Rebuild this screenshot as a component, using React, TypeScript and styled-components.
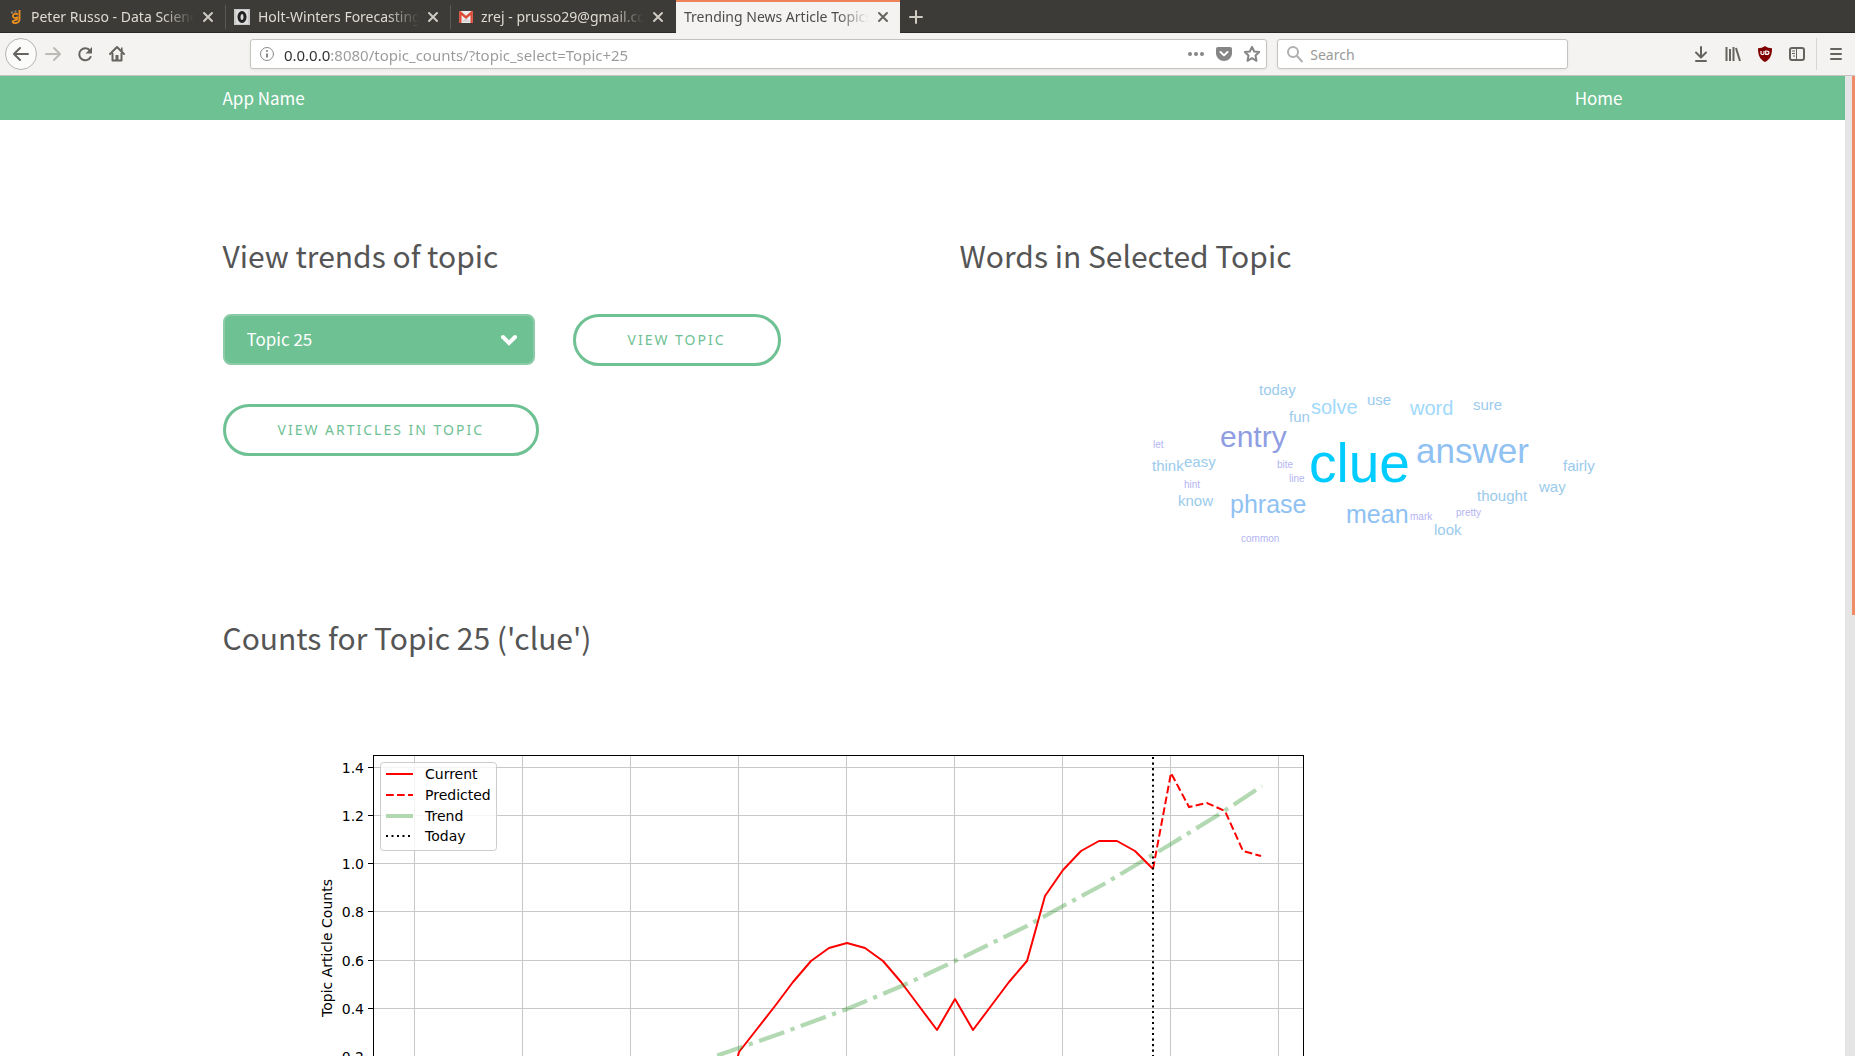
import React from "react";
import styled, { createGlobalStyle } from "styled-components";

const GREEN = "#6ec193";
const UI_FONT = '"Noto Sans", "Open Sans", sans-serif';
const PAGE_FONT = '"Noto Sans CJK SC", "Noto Sans", sans-serif';

const GlobalStyle = createGlobalStyle`
  * { box-sizing: border-box; }
  body { margin: 0; background: #fff; font-family: ${PAGE_FONT}; }
  button, input, select { font: inherit; }
`;

/* ---------- browser chrome ---------- */

const Window = styled.div`
  display: flex;
  flex-direction: column;
  height: 100vh;
  overflow: hidden;
`;

const TabStrip = styled.div`
  display: flex;
  flex: none;
  height: 33px;
  background: #3c3b37;
  box-shadow: inset 0 -1px #2a2927;
  font: 14px/20px ${UI_FONT};
`;

const Tab = styled.div<{ $active?: boolean }>`
  display: flex;
  align-items: center;
  gap: 8px;
  width: ${(p) => (p.$active ? 224 : 225)}px;
  margin-left: ${(p) => (p.$active ? 1 : 0)}px;
  padding: ${(p) => (p.$active ? "0 11px 0 8px" : "0 11px 0 9px")};
  color: ${(p) => (p.$active ? "#4c4c4c" : "#dfdbd2")};
  background: ${(p) => (p.$active ? "#f4f3f1" : "transparent")};
  box-shadow: ${(p) => (p.$active ? "inset 0 2px #f0825a" : "none")};
`;

const TabDivider = styled.span`
  flex: none;
  width: 1px;
  height: 24px;
  margin-top: 5px;
  margin-right: -1px;
  background: #5b5953;
`;

const TabTitle = styled.button`
  flex: 1;
  min-width: 0;
  padding: 0;
  border: 0;
  background: none;
  color: inherit;
  text-align: left;
  white-space: nowrap;
  overflow: hidden;
  mask-image: linear-gradient(to left, transparent, #000 32px);
`;

const IconButton = styled.button<{ $w?: number; $color?: string; $round?: boolean }>`
  display: flex;
  flex: none;
  align-self: center;
  align-items: center;
  justify-content: center;
  width: ${(p) => p.$w ?? 32}px;
  height: ${(p) => (p.$round ? 32 : 24)}px;
  padding: 0;
  border: ${(p) => (p.$round ? "1px solid #b5b4b1" : "0")};
  border-radius: ${(p) => (p.$round ? "50%" : "0")};
  background: ${(p) => (p.$round ? "#fbfbfa" : "none")};
  color: ${(p) => p.$color ?? "#66645f"};
`;

const Toolbar = styled.div`
  display: flex;
  flex: none;
  align-items: center;
  height: 43px;
  padding: 0 3px 0 5px;
  background: #f4f3f1;
  border-bottom: 1px solid #c6c4c1;
  font: 14px/20px ${UI_FONT};
`;

const Spring = styled.span`
  flex: 117 1 0;
`;

const Field = styled.label<{ $grow: number }>`
  display: flex;
  flex: ${(p) => p.$grow} 1 0;
  min-width: 0;
  align-items: center;
  height: 30px;
  padding: 0 0 0 8px;
  background: #fff;
  border: 1px solid #c5c3bf;
  border-radius: 3px;
  box-shadow: 0 1px 3px rgba(0, 0, 0, 0.06);
  color: #8a8a8a;
`;

const AddressInput = styled.input`
  flex: 1;
  min-width: 0;
  padding: 1px 0 0 9px;
  border: 0;
  outline: 0;
  font-size: 15px;
  color: transparent;
  background: linear-gradient(to right, #2e2e2e 56px, #999 56px);
  background-clip: text;
`;

const SearchInput = styled.input`
  flex: 1;
  min-width: 0;
  padding: 1px 0 0 6px;
  border: 0;
  outline: 0;
  background: none;
  &::placeholder { color: #999; opacity: 1; }
`;

const FieldGap = styled.span`
  flex: none;
  width: 10px;
`;

const ToolbarDivider = styled.span`
  width: 1px;
  height: 32px;
  margin: 0 3px;
  background: #d7d5d2;
`;

/* ---------- page ---------- */

const Viewport = styled.div`
  display: flex;
  flex: 1;
  min-height: 0;
`;

const Page = styled.div`
  flex: 1;
  min-width: 0;
  overflow-y: auto;
  scrollbar-width: none;
  color: #555;
`;

const ScrollTrack = styled.div`
  display: flex;
  justify-content: flex-end;
  width: 10px;
  background: #e5e5e5;
`;

const ScrollThumb = styled.div`
  width: 3px;
  height: 55%;
  background: #ef8c65;
`;

const NavBar = styled.nav`
  background: ${GREEN};
`;

const Container = styled.div`
  max-width: 1400px;
  margin: 0 auto;
`;

const NavRow = styled(Container)`
  display: flex;
  justify-content: space-between;
  font-size: 17px;
  line-height: 44px;
`;

const NavLink = styled.a`
  color: #fff;
  text-decoration: none;
`;

const Main = styled(Container).attrs({ as: "main" })`
  padding-top: 112px;
`;

const Columns = styled.div`
  display: grid;
  grid-template-columns: 1fr 1fr;
  column-gap: 74px;
`;

const Heading = styled.h2`
  margin: 0 0 36px;
  font-size: 30px;
  font-weight: 400;
  line-height: 46px;
`;

const TopicForm = styled.form`
  display: flex;
  flex-wrap: wrap;
  gap: 38px;
`;

const SelectBox = styled.label`
  display: grid;
  grid-template-columns: 1fr 33px;
  align-items: center;
  width: 312px;
  height: 51px;
  color: #fff;
  background: ${GREEN};
  border: 2px solid #8bcba8;
  border-radius: 8px;

  svg {
    grid-area: 1 / 2;
    pointer-events: none;
    z-index: 1;
  }
`;

const Select = styled.select`
  grid-area: 1 / 1 / 2 / 3;
  height: 47px;
  padding: 0 22px 2px;
  border: 0;
  outline: 0;
  appearance: none;
  background: transparent;
  color: inherit;
  font-size: 17px;
`;

const PillButton = styled.button`
  height: 52px;
  padding: 0 52px;
  border: 3px solid ${GREEN};
  border-radius: 26px;
  background: transparent;
  color: ${GREEN};
  font: 14px/20px ${UI_FONT};
  letter-spacing: 2px;
  text-transform: uppercase;
  white-space: nowrap;
`;

const Cloud = styled.div`
  display: flex;
  justify-content: flex-end;
  padding-right: 12px;

  text { font-family: "Liberation Sans", Arial, sans-serif; }
`;

const Figure = styled.figure`
  margin: 0;

  svg { display: block; }
  text { font-family: "DejaVu Sans", sans-serif; font-size: 14px; fill: #000; }
`;

/* ---------- icons ---------- */

const stroke = (w: number) => ({
  fill: "none",
  stroke: "currentColor",
  strokeWidth: w,
  strokeLinecap: "round" as const,
  strokeLinejoin: "round" as const,
});

const CloseIcon = () => (
  <svg width="12" height="12" viewBox="0 0 12 12"><path d="M2 2l8 8M10 2l-8 8" {...stroke(2)} /></svg>
);
const PlusIcon = () => (
  <svg width="16" height="16" viewBox="0 0 16 16"><path d="M8 2v12M2 8h12" {...stroke(2)} /></svg>
);
const BackIcon = () => (
  <svg width="18" height="16" viewBox="0 0 18 16"><path d="M16 8H2M8 2L2 8l6 6" {...stroke(2)} /></svg>
);
const ForwardIcon = () => (
  <svg width="18" height="16" viewBox="0 0 18 16"><path d="M2 8h14M10 2l6 6-6 6" {...stroke(2)} /></svg>
);
const ReloadIcon = () => (
  <svg width="16" height="16" viewBox="0 0 16 16">
    <path d="M13 4.6A6 6 0 1 0 13.6 11" {...stroke(2)} />
    <path d="M15 1v6.5H8.5z" fill="currentColor" />
  </svg>
);
const HomeIcon = () => (
  <svg width="18" height="18" viewBox="0 0 18 18">
    <path d="M2 9l7-7 7 7" {...stroke(2)} />
    <path d="M4.5 8.500v7h9v-7" {...stroke(2)} />
    <path d="M7.500 10h3v6h-3z" fill="currentColor" />
    <path d="M13 2.500h1.600v4H13z" fill="currentColor" />
  </svg>
);
const InfoIcon = () => (
  <svg width="16" height="16" viewBox="0 0 16 16">
    <circle cx="8" cy="8" r="6.500" {...stroke(1)} />
    <path d="M8 7.500v4" {...stroke(2)} strokeLinecap="butt" />
    <circle cx="8" cy="5" r="1.100" fill="currentColor" />
  </svg>
);
const DotsIcon = () => (
  <svg width="16" height="16" viewBox="0 0 16 16" fill="currentColor">
    <circle cx="2" cy="8" r="2" /><circle cx="8" cy="8" r="2" /><circle cx="14" cy="8" r="2" />
  </svg>
);
const PocketIcon = () => (
  <svg width="16" height="16" viewBox="0 0 16 16">
    <path d="M2 1h12a2 2 0 0 1 2 2v4.500a8 7.500 0 0 1-16 0V3a2 2 0 0 1 2-2z" fill="currentColor" />
    <path d="M4.500 6L8 9.400 11.500 6" fill="none" stroke="#fff" strokeWidth="2" strokeLinecap="round" strokeLinejoin="round" />
  </svg>
);
const StarIcon = () => (
  <svg width="18" height="18" viewBox="0 0 18 18">
    <path d="M9 1.800l2.200 4.700 5 .6-3.700 3.500 1 5.200L9 13.200l-4.500 2.600 1-5.200L1.800 7.100l5-.6z" {...stroke(2)} />
  </svg>
);
const SearchIcon = () => (
  <svg width="18" height="18" viewBox="0 0 18 18">
    <circle cx="7" cy="7" r="5" {...stroke(2)} stroke="#b0b0b0" />
    <path d="M11 11l5 5.500" {...stroke(2)} stroke="#b0b0b0" />
  </svg>
);
const DownloadIcon = () => (
  <svg width="16" height="18" viewBox="0 0 16 18">
    <path d="M8 2v10M3 7.500L8 12.500l5-5M3 16h10" {...stroke(2)} />
  </svg>
);
const LibraryIcon = () => (
  <svg width="16" height="16" viewBox="0 0 16 16">
    <path d="M1.500 1v14M5 3v12M8.500 1v14M11 2l4 13" {...stroke(2)} strokeLinecap="butt" />
  </svg>
);
const ShieldIcon = () => (
  <svg width="16" height="18" viewBox="0 0 16 18">
    <path d="M8 1c2 1.600 4.500 2.200 7 2.200C15 10 13.500 14 8 17 2.500 14 1 10 1 3.200 3.500 3.200 6 2.600 8 1z" fill="#800000" />
    <path d="M4 6v2.600c0 1.200 3 1.200 3 0V6M8.700 6v3.400h1c3 0 3-3.400 0-3.400z" fill="none" stroke="#fff" strokeWidth="1.200" />
  </svg>
);
const SidebarIcon = () => (
  <svg width="16" height="16" viewBox="0 0 16 16">
    <rect x="1" y="2" width="14" height="12" rx="2" {...stroke(2)} />
    <path d="M7.500 2v12M3 5h3M3 7.500h3M4 10h2" {...stroke(1)} strokeLinecap="butt" />
  </svg>
);
const MenuIcon = () => (
  <svg width="16" height="16" viewBox="0 0 16 16"><path d="M3 3h10M3 8h10M3 13h10" {...stroke(2)} /></svg>
);
const ChevronIcon = () => (
  <svg width="18" height="14" viewBox="0 0 18 14">
    <path d="M3 4l6 6 6-6" fill="none" stroke="#fff" strokeWidth="4" strokeLinecap="round" />
  </svg>
);
const SnakeFavicon = () => (
  <svg width="14" height="16" viewBox="0 0 14 16">
    <path d="M10.500 1v9c0 5-7 5-7 2.500 0-1.500 5-1 5-3" fill="none" stroke="#f09020" strokeWidth="1.800" />
    <path d="M9 5.500c-3-2-5.500 0-5 2s3.500 2 5 .5" fill="none" stroke="#f09020" strokeWidth="1.800" />
    <path d="M2 2.500h2v2H2zM5.500 1.500h2v2h-2z" fill="#8b8273" />
  </svg>
);
const OtextsFavicon = () => (
  <svg width="16" height="16" viewBox="0 0 16 16">
    <rect width="16" height="16" fill="#c9c9c9" />
    <rect x="2" y="1" width="12" height="14" fill="#dcdcdc" />
    <ellipse cx="8" cy="8" rx="3" ry="4.500" fill="none" stroke="#222" strokeWidth="3" />
  </svg>
);
const MailFavicon = () => (
  <svg width="14" height="12" viewBox="0 0 14 12">
    <rect width="14" height="12" rx="1" fill="#ececec" />
    <path d="M2 11l5-4 5 4" fill="#d5d5d5" />
    <path d="M1.300 12V1.500L7 6.500l5.700-5V12" fill="none" stroke="#dd4b39" strokeWidth="2.400" />
  </svg>
);

/* ---------- word cloud ---------- */

type Word = [text: string, size: number, x: number, y: number];

const WORDS: Word[] = [
  ["clue", 55, 198, 168], ["answer", 35, 305, 149], ["entry", 30, 109, 133],
  ["phrase", 25, 119, 199], ["mean", 25, 235, 209], ["solve", 20, 200, 100],
  ["word", 20, 299, 101], ["today", 15, 148, 81], ["fun", 15, 178, 108],
  ["use", 15, 256, 91], ["sure", 15, 362, 96], ["easy", 15, 73, 153],
  ["think", 15, 41, 157], ["know", 15, 67, 192], ["fairly", 15, 452, 157],
  ["way", 15, 428, 178], ["thought", 15, 366, 187], ["look", 15, 323, 221],
  ["let", 10, 42, 134], ["bite", 10, 166, 154], ["line", 10, 178, 168],
  ["hint", 10, 73, 174], ["mark", 10, 299, 206], ["pretty", 10, 345, 202],
  ["common", 10, 130, 228],
];

const SIZE_COLOR: Record<number, string> = {
  55: "#00ccff", 35: "#8fc1f2", 30: "#8f9de2", 25: "#8fc1f2",
  20: "#a0d9fb", 15: "#9acbec", 10: "#b3b5f2",
};

const WordCloud = () => (
  <svg width="500" height="300" viewBox="0 0 500 300" role="img" aria-label="Words in selected topic">
    {WORDS.map(([text, size, x, y]) => (
      <text key={text} x={x} y={y} fontSize={size} fill={SIZE_COLOR[size]}>{text}</text>
    ))}
  </svg>
);

/* ---------- chart ---------- */

const LEFT = 150;
const RIGHT = 1081;
const TOP = 60;
const BOTTOM = 445;

const ROWS = [1.4, 1.2, 1.0, 0.8, 0.6, 0.4, 0.2, 0.0].map((value, i) => ({
  value,
  y: Math.round(72 + i * 48.15) + 0.5,
}));
const COLUMNS = Array.from({ length: 9 }, (_, i) => 191.5 + i * 108);

const line = (x0: number, ys: number[]) => ys.map((y, i) => `${x0 + i * 18},${y}`).join(" ");

const CURRENT = line(498, [
  430, 357, 334, 311, 287, 266, 253, 248, 253, 266, 287, 311, 335, 304, 335,
  311, 287, 266, 201, 175, 156, 146, 146, 156, 174,
]);
const PREDICTED = line(930, [174, 78, 112, 108, 116, 156, 161]);
const TREND =
  "452,374 493,361 516,353 559,338 624,314 681,290 732,266 802,232 840,211 881,189 948,149 995,120 1039,91";

const LEGEND = [
  { label: "Current", y: 79, props: { stroke: "#f00", strokeWidth: 2 } },
  { label: "Predicted", y: 100, props: { stroke: "#f00", strokeWidth: 2, strokeDasharray: "7.700 3.300" } },
  { label: "Trend", y: 121, props: { stroke: "#b2d8b2", strokeWidth: 4 } },
  { label: "Today", y: 141, props: { stroke: "#000", strokeWidth: 2, strokeDasharray: "2 3.500" } },
];

const Chart = () => (
  <svg width="1200" height="499" viewBox="0 1 1200 499" role="img" aria-label="Topic article counts over time">
    <g stroke="#c8c8c8" strokeWidth="1">
      {COLUMNS.map((x) => <path key={x} d={`M${x} ${TOP}V${BOTTOM}`} />)}
      {ROWS.map((r) => <path key={r.value} d={`M${LEFT} ${r.y}H${RIGHT}`} />)}
    </g>
    <g fill="none">
      <polyline points={CURRENT} stroke="#f00" strokeWidth="2" strokeLinejoin="round" />
      <polyline points={PREDICTED} stroke="#f00" strokeWidth="2" strokeDasharray="7.700 3.300" />
      <polyline points={TREND} stroke="#008000" strokeOpacity="0.3" strokeWidth="4.200" strokeDasharray="26.700 6.700 4.200 6.700" />
      <path d={`M930 ${BOTTOM}V${TOP}`} stroke="#000" strokeWidth="2" strokeDasharray="2.080 3.440" />
      <rect x={LEFT + 0.5} y={TOP + 0.5} width={RIGHT - LEFT - 1} height={BOTTOM - TOP} stroke="#000" />
    </g>
    {ROWS.map((r) => (
      <g key={r.value}>
        <path d={`M${LEFT - 5} ${r.y}H${LEFT}`} stroke="#000" />
        <text x={LEFT - 9} y={r.y + 5} textAnchor="end">{r.value.toFixed(1)}</text>
      </g>
    ))}
    <text transform="translate(109 253) rotate(-90)" textAnchor="middle">Topic Article Counts</text>
    <rect x="157.500" y="67.500" width="116" height="88" rx="3" fill="#fff" fillOpacity="0.8" stroke="#ccc" />
    {LEGEND.map((l) => (
      <g key={l.label}>
        <path d={`M163 ${l.y}H190`} {...l.props} />
        <text x="202" y={l.y + 5}>{l.label}</text>
      </g>
    ))}
  </svg>
);

/* ---------- app ---------- */

const TABS = [
  { title: "Peter Russo - Data Science", icon: <SnakeFavicon /> },
  { title: "Holt-Winters Forecasting", icon: <OtextsFavicon /> },
  { title: "zrej - prusso29@gmail.com", icon: <MailFavicon /> },
];

export default function App() {
  return (
    <Window>
      <GlobalStyle />
      <TabStrip>
        {TABS.map((t, i) => (
          <React.Fragment key={t.title}>
            <Tab>
              {t.icon}
              <TabTitle>{t.title}</TabTitle>
              <IconButton $w={12} $color="#d0ccc4" aria-label="Close tab"><CloseIcon /></IconButton>
            </Tab>
            {i < 2 && <TabDivider />}
          </React.Fragment>
        ))}
        <Tab $active>
          <TabTitle>Trending News Article Topics</TabTitle>
          <IconButton $w={12} aria-label="Close tab"><CloseIcon /></IconButton>
        </Tab>
        <IconButton $w={32} $color="#d0ccc4" aria-label="New tab"><PlusIcon /></IconButton>
      </TabStrip>

      <Toolbar>
        <IconButton $round aria-label="Back"><BackIcon /></IconButton>
        <IconButton $color="#bcbab6" aria-label="Forward"><ForwardIcon /></IconButton>
        <IconButton aria-label="Reload"><ReloadIcon /></IconButton>
        <IconButton aria-label="Home"><HomeIcon /></IconButton>
        <Spring />
        <Field $grow={1008}>
          <InfoIcon />
          <AddressInput aria-label="Address" defaultValue="0.0.0.0:8080/topic_counts/?topic_select=Topic+25" />
          <IconButton $w={28} $color="#858585" aria-label="Page actions"><DotsIcon /></IconButton>
          <IconButton $w={28} $color="#858585" aria-label="Save to Pocket"><PocketIcon /></IconButton>
          <IconButton $w={28} $color="#858585" aria-label="Bookmark"><StarIcon /></IconButton>
        </Field>
        <FieldGap />
        <Field $grow={281}>
          <SearchIcon />
          <SearchInput aria-label="Search" placeholder="Search" />
        </Field>
        <Spring />
        <IconButton aria-label="Downloads"><DownloadIcon /></IconButton>
        <IconButton aria-label="Library"><LibraryIcon /></IconButton>
        <IconButton aria-label="uBlock"><ShieldIcon /></IconButton>
        <IconButton aria-label="Sidebars"><SidebarIcon /></IconButton>
        <ToolbarDivider />
        <IconButton aria-label="Menu"><MenuIcon /></IconButton>
      </Toolbar>

      <Viewport>
        <Page>
          <NavBar>
            <NavRow>
              <NavLink href="#">App Name</NavLink>
              <NavLink href="#">Home</NavLink>
            </NavRow>
          </NavBar>
          <Main>
            <Columns>
              <section>
                <Heading>View trends of topic</Heading>
                <TopicForm>
                  <SelectBox>
                    <Select aria-label="Topic" defaultValue="Topic 25">
                      <option>Topic 25</option>
                    </Select>
                    <ChevronIcon />
                  </SelectBox>
                  <PillButton type="button">View Topic</PillButton>
                  <PillButton type="button">View Articles in Topic</PillButton>
                </TopicForm>
              </section>
              <section>
                <Heading>Words in Selected Topic</Heading>
                <Cloud><WordCloud /></Cloud>
              </section>
            </Columns>
            <section>
              <Heading>Counts for Topic 25 ('clue')</Heading>
              <Figure><Chart /></Figure>
            </section>
          </Main>
        </Page>
        <ScrollTrack><ScrollThumb /></ScrollTrack>
      </Viewport>
    </Window>
  );
}
